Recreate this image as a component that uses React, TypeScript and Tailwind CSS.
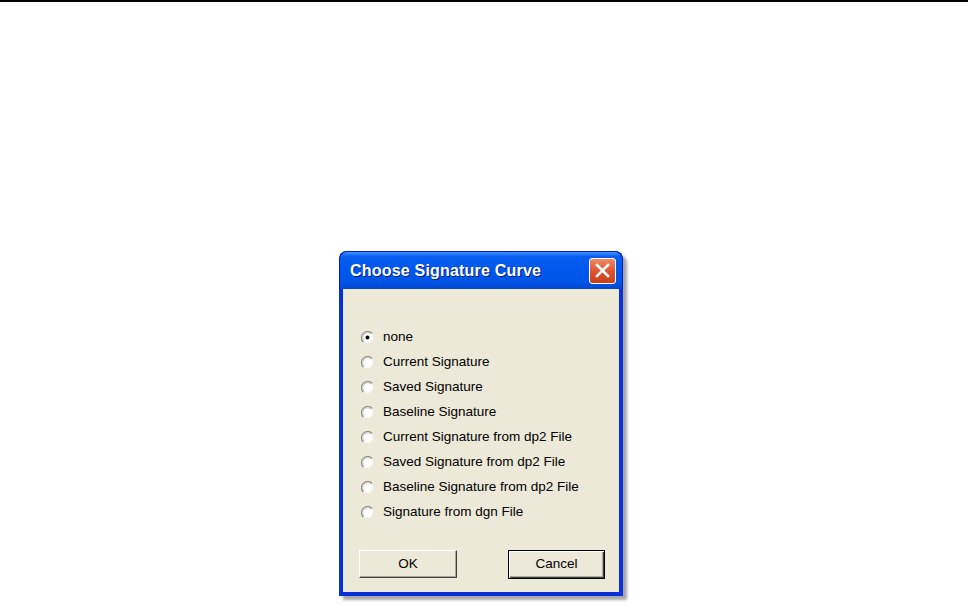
// <== IMPORTS ==>
import { JSX } from "react";

// <== OPTIONS ==>
const OPTIONS: string[] = [
  "none",
  "Current Signature",
  "Saved Signature",
  "Baseline Signature",
  "Current Signature from dp2 File",
  "Saved Signature from dp2 File",
  "Baseline Signature from dp2 File",
  "Signature from dgn File",
];

// <== RADIO ==>
const Radio = ({ checked }: { checked: boolean }): JSX.Element => (
  <svg width="13" height="13" viewBox="0 0 13 13" className="shrink-0">
    <circle cx="6.5" cy="6.5" r="5.5" fill="#ffffff" />
    <path d="M2.3 11.2 A6 6 0 0 1 11.2 2.3" fill="none" stroke="#8f8d84" strokeWidth="1.2" />
    <path d="M3.2 10 A4.8 4.8 0 0 1 10 3.2" fill="none" stroke="#c4c1b4" strokeWidth="1" />
    <path d="M11.4 3.6 A6 6 0 0 1 3.6 11.4" fill="none" stroke="#f7f6f1" strokeWidth="1" />
    {checked && <circle cx="6.5" cy="6.5" r="2" fill="#000000" />}
  </svg>
);

// <== APP ==>
const App = (): JSX.Element => {
  return (
    <div className="w-[972px] h-[605px] bg-white overflow-hidden font-['Liberation_Sans',Arial,sans-serif]">
      {/* TOP RULE */}
      <div className="w-[968px] h-[2px] bg-black" />
      {/* DIALOG */}
      <div className="ml-[339px] mt-[249px] w-[284px] rounded-t-[8px] bg-[#0831d9] px-[4px] pb-[4px] shadow-[4px_4px_3px_rgba(0,0,0,0.35)]">
        {/* TITLE BAR */}
        <div className="-mx-[4px] h-[38px] rounded-t-[8px] flex items-center justify-between pl-[10px] pr-[6px] bg-[linear-gradient(to_bottom,#3d95ff_0%,#0a5ff0_12%,#0058ee_40%,#0055e5_80%,#0047d3_100%)] border border-[#0019cf] border-b-0">
          <span className="text-white font-bold text-[16px] [text-shadow:1px_1px_0_#0a1e80] tracking-[0.2px]">
            Choose Signature Curve
          </span>
          <div className="w-[27px] h-[26px] rounded-[3px] border border-white bg-[linear-gradient(to_bottom,#ee8a66,#dd5030_55%,#c9401c)] flex items-center justify-center">
            <svg width="15" height="15" viewBox="0 0 15 15">
              <path d="M2 2 L13 13 M13 2 L2 13" stroke="#ffffff" strokeWidth="2.6" strokeLinecap="square" />
            </svg>
          </div>
        </div>
        {/* CLIENT */}
        <div className="bg-[#ece9d8] h-[303px] pt-[36px] px-[14px] text-[13.5px] text-black">
          <div className="flex flex-col pl-[4px]">
            {OPTIONS.map((label, i) => (
              <div key={label} className="h-[25px] flex items-center gap-[9px]">
                <Radio checked={i === 0} />
                <span>{label}</span>
              </div>
            ))}
          </div>
          {/* BUTTONS */}
          <div className="mt-[25px] flex justify-between pl-[2px]">
            <button className="w-[98px] h-[28px] bg-[#ece9d8] border border-t-white border-l-white border-r-[#404040] border-b-[#404040] shadow-[inset_-1px_-1px_0_#aca899] text-[13.5px]">
              OK
            </button>
            <button className="w-[97px] h-[29px] bg-[#ece9d8] border border-black shadow-[inset_1px_1px_0_#ffffff,inset_-1px_-1px_0_#404040,inset_-2px_-2px_0_#aca899] text-[13.5px]">
              Cancel
            </button>
          </div>
        </div>
      </div>
    </div>
  );
};

// <== EXPORT ==>
export default App;
